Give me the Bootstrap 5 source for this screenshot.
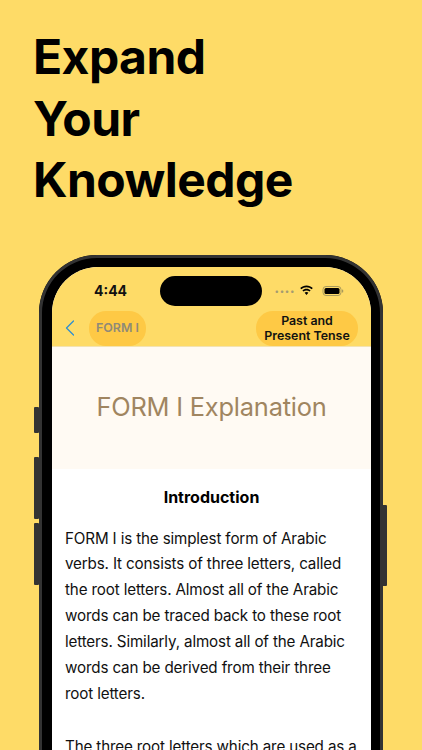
<!DOCTYPE html>
<html lang="en">
<head>
<meta charset="utf-8">
<title>Expand Your Knowledge</title>
<link rel="stylesheet" href="https://cdn.jsdelivr.net/npm/bootstrap@5.3.0/dist/css/bootstrap.min.css">
<style>
html,body{margin:0;height:750px;overflow:hidden;background:#fedb67;}
body{font-family:Inter,"Liberation Sans",sans-serif;color:#000;}
.poster{height:750px;overflow:hidden;background:#fedb67;}
.headline{margin:26px 0 0 33px;font-size:48px;font-weight:700;line-height:61.5px;letter-spacing:-.55px;color:#000;}
.phone{position:relative;width:344px;height:560px;margin:44px 0 0 39px;padding:12px 12px 0 13px;background:#000;border-radius:58px 58px 0 0;box-shadow:inset 0 0 0 3px #333;}
.side-btn{position:absolute;background:#333;border-radius:1px;width:5px;}
.screen{height:548px;background:#fff;border-radius:46px 46px 0 0;overflow:hidden;}
.statusbar{height:44px;background:#fedb67;padding:4px 27px 0 42px;}
.clock{font-size:14px;font-weight:700;line-height:1;color:#111;}
.island{width:102px;height:30px;background:#000;border-radius:15px;margin-left:33px;}
.dots{color:#a59b70;font-size:8px;letter-spacing:.6px;line-height:1;}
.appbar{height:36px;background:#fedb67;padding:0 13px 0 13px;border-bottom:1px solid #f3e3b2;}
.pill{background:#fec945;border-radius:17px;font-weight:600;font-size:12.4px;}
.pill-form{width:57px;height:35px;color:#8f8a78;margin-left:14px;}
.pill-tense{width:102px;height:35px;color:#111;line-height:15px;text-align:center;}
.hero{height:122px;background:#fffaf3;color:#a08560;font-size:25.4px;font-weight:400;letter-spacing:-.2px;}
.intro{font-size:16px;font-weight:700;line-height:20px;margin:18px 0 19px;color:#000;}
.copy{font-size:15.2px;line-height:25.9px;padding:0 0 0 13px;color:#111;white-space:nowrap;letter-spacing:-.15px;}
.copy p{margin:0 0 27px;}
</style>
</head>
<body>
<main class="poster">
  <h1 class="headline">Expand<br>Your<br>Knowledge</h1>
  <div class="phone">
    <span class="side-btn" style="left:-5px;top:152px;height:26px"></span>
    <span class="side-btn" style="left:-5px;top:202px;height:62px"></span>
    <span class="side-btn" style="left:-5px;top:268px;height:62px"></span>
    <span class="side-btn" style="right:-4px;top:250px;height:81px"></span>
    <div class="screen">
      <div class="statusbar d-flex align-items-center">
        <span class="clock">4:44</span>
        <span class="island"></span>
        <span class="dots ms-auto">••••</span>
        <svg class="ms-1" width="15" height="11" viewBox="0 0 14 11" aria-hidden="true"><path d="M7 2.200c2 0 3.800.8 5.200 2l1.100-1.200C11.600 1.400 9.400.4 7 .4S2.400 1.400.7 3l1.100 1.200C3.200 3 5 2.200 7 2.200zM7 5.400c1.100 0 2.200.4 3 1.200l1.100-1.200C10 4.300 8.600 3.700 7 3.700S4 4.300 2.900 5.400L4 6.600c.8-.8 1.900-1.200 3-1.200zM7 7c-.8 0-1.400.3-1.900.8L7 10l1.900-2.200C8.400 7.300 7.800 7 7 7z" fill="#000"/></svg>
        <svg class="ms-2" width="22" height="10" viewBox="0 0 21 10" aria-hidden="true"><rect x=".5" y=".5" width="18" height="9" rx="3" fill="none" stroke="#a89a5c"/><rect x="2" y="2" width="15" height="6" rx="1.500" fill="#000"/><rect x="19.500" y="3.500" width="1.200" height="3" rx=".6" fill="#a89a5c"/></svg>
      </div>
      <nav class="appbar d-flex align-items-center" aria-label="Verb form">
        <svg width="10" height="16" viewBox="0 0 10 16" aria-hidden="true"><path d="M8.500 1 1.500 8l7 7" fill="none" stroke="#2f8fd0" stroke-width="1.300" stroke-linecap="round" stroke-linejoin="round"/></svg>
        <span class="pill pill-form d-flex align-items-center justify-content-center">FORM I</span>
        <span class="pill pill-tense d-flex align-items-center justify-content-center ms-auto">Past and<br>Present Tense</span>
      </nav>
      <div class="hero d-flex align-items-center justify-content-center">FORM I Explanation</div>
      <h2 class="intro text-center">Introduction</h2>
      <div class="copy">
        <p>FORM I is the simplest form of Arabic<br>verbs. It consists of three letters, called<br>the root letters. Almost all of the Arabic<br>words can be traced back to these root<br>letters. Similarly, almost all of the Arabic<br>words can be derived from their three<br>root letters.</p>
        <p>The three root letters which are used as a</p>
      </div>
    </div>
  </div>
</main>
<script src="https://cdn.jsdelivr.net/npm/bootstrap@5.3.0/dist/js/bootstrap.bundle.min.js"></script>
</body>
</html>
